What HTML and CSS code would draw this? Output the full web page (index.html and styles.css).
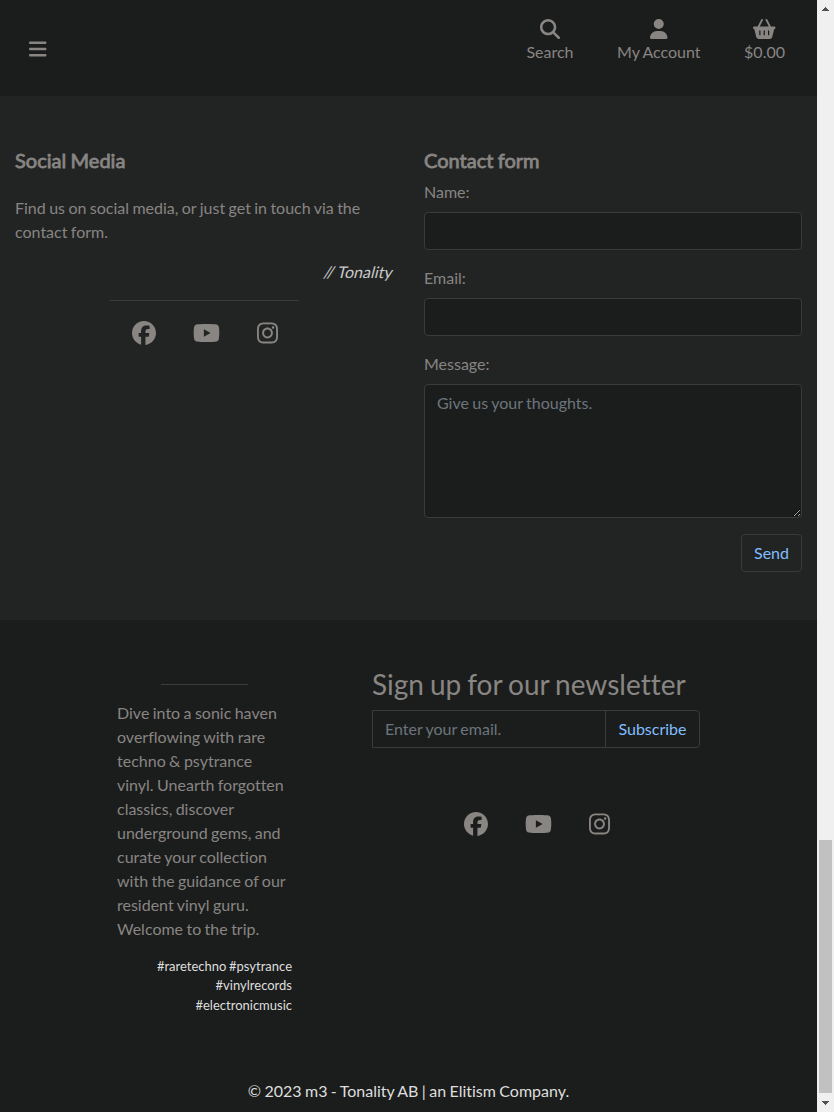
FILE: index.html
```
<!DOCTYPE html>
<html lang="en">
<head>
<meta charset="utf-8">
<title>Tonality</title>
<link rel="stylesheet" href="styles.css">
</head>
<body>
<svg class="sprite" aria-hidden="true">
  <symbol id="facebook" viewBox="0 0 512 512"><path d="M512 256C512 114.6 397.4 0 256 0S0 114.6 0 256C0 376 82.7 476.8 194.2 504.5V334.2H141.4V256h52.8V222.3c0-87.1 39.4-127.5 125-127.5c16.2 0 44.2 3.2 55.7 6.4V172c-6-.6-16.5-1-29.6-1c-42 0-58.2 15.9-58.2 57.2V256h83.6l-14.4 78.2H287V510.1C413.8 494.8 512 386.9 512 256h0z"/></symbol>
  <symbol id="youtube" viewBox="0 0 576 512"><path d="M549.655 124.083c-6.281-23.65-24.787-42.276-48.284-48.597C458.781 64 288 64 288 64S117.22 64 74.629 75.486c-23.497 6.322-42.003 24.947-48.284 48.597-11.412 42.867-11.412 132.305-11.412 132.305s0 89.438 11.412 132.305c6.281 23.65 24.787 41.5 48.284 47.821C117.22 448 288 448 288 448s170.78 0 213.371-11.486c23.497-6.321 42.003-24.171 48.284-47.821 11.412-42.867 11.412-132.305 11.412-132.305s0-89.438-11.412-132.305zm-317.51 213.508V175.185l142.739 81.205-142.739 81.201z"/></symbol>
  <symbol id="instagram" viewBox="0 0 448 512"><path d="M224.1 141c-63.6 0-114.9 51.3-114.9 114.9s51.3 114.9 114.9 114.9S339 319.5 339 255.9 287.7 141 224.1 141zm0 189.6c-41.1 0-74.7-33.5-74.7-74.7s33.5-74.7 74.7-74.7 74.7 33.5 74.7 74.7-33.6 74.7-74.7 74.7zm146.4-194.3c0 14.9-12 26.8-26.8 26.8-14.9 0-26.8-12-26.8-26.8s12-26.8 26.8-26.8 26.8 12 26.8 26.8zm76.1 27.2c-1.7-35.9-9.9-67.7-36.2-93.9-26.2-26.2-58-34.4-93.9-36.2-37-2.1-147.9-2.1-184.9 0-35.8 1.7-67.6 9.9-93.9 36.1s-34.4 58-36.2 93.9c-2.1 37-2.1 147.9 0 184.9 1.7 35.9 9.9 67.7 36.2 93.9s58 34.4 93.9 36.2c37 2.1 147.9 2.1 184.9 0 35.9-1.7 67.7-9.9 93.9-36.2 26.2-26.2 34.4-58 36.2-93.9 2.1-37 2.1-147.8 0-184.8zM398.8 388c-7.8 19.6-22.9 34.7-42.6 42.6-29.5 11.7-99.5 9-132.1 9s-102.7 2.6-132.1-9c-19.6-7.8-34.7-22.9-42.6-42.6-11.7-29.5-9-99.5-9-132.1s-2.6-102.7 9-132.1c7.8-19.6 22.9-34.7 42.6-42.6 29.5-11.7 99.5-9 132.1-9s102.7-2.6 132.1 9c19.6 7.8 34.7 22.9 42.6 42.6 11.7 29.5 9 99.5 9 132.1s2.7 102.7-9 132.1z"/></symbol>
</svg>
<div class="window">
  <div class="page">
    <header class="topbar">
      <svg class="bars" viewBox="0 0 448 512"><path d="M0 96C0 78.300 14.300 64 32 64H416c17.700 0 32 14.300 32 32s-14.300 32-32 32H32C14.300 128 0 113.700 0 96zM0 256c0-17.700 14.300-32 32-32H416c17.700 0 32 14.300 32 32s-14.300 32-32 32H32c-17.700 0-32-14.300-32-32zM448 416c0 17.700-14.300 32-32 32H32c-17.700 0-32-14.300-32-32s14.300-32 32-32H416c17.700 0 32 14.300 32 32z"/></svg>
      <nav class="menu">
        <a class="menu-item"><svg viewBox="0 0 512 512"><path d="M416 208c0 45.900-14.900 88.300-40 122.700L502.600 457.400c12.500 12.500 12.500 32.800 0 45.300s-32.800 12.500-45.300 0L330.700 376c-34.400 25.200-76.800 40-122.700 40C93.100 416 0 322.900 0 208S93.100 0 208 0S416 93.100 416 208zM208 352a144 144 0 1 0 0-288 144 144 0 1 0 0 288z"/></svg><span>Search</span></a>
        <a class="menu-item"><svg class="user" viewBox="0 0 448 512"><path d="M224 256A128 128 0 1 0 224 0a128 128 0 1 0 0 256zm-45.700 48C79.800 304 0 383.800 0 482.300C0 498.700 13.300 512 29.700 512H418.300c16.400 0 29.700-13.300 29.700-29.700C448 383.800 368.200 304 269.700 304H178.300z"/></svg><span>My Account</span></a>
        <a class="menu-item"><svg class="basket" viewBox="0 0 576 512"><path d="M253.300 35.100c6.100-11.800 1.500-26.300-10.200-32.400s-26.300-1.500-32.400 10.200L117.600 192H32c-17.700 0-32 14.300-32 32s14.300 32 32 32L83.900 463.500C91 492 116.600 512 146 512H430c29.400 0 55-20 62.100-48.500L544 256c17.700 0 32-14.300 32-32s-14.300-32-32-32H458.400L365.300 12.900C359.200 1.200 344.700-3.400 332.900 2.700s-16.300 20.600-10.200 32.400L404.300 192H171.700L253.300 35.100zM192 304v96c0 8.800-7.200 16-16 16s-16-7.200-16-16V304c0-8.800 7.200-16 16-16s16 7.200 16 16zm96-16c8.800 0 16 7.200 16 16v96c0 8.800-7.200 16-16 16s-16-7.200-16-16V304c0-8.800 7.200-16 16-16zm128 16v96c0 8.800-7.200 16-16 16s-16-7.200-16-16V304c0-8.800 7.200-16 16-16s16 7.200 16 16z"/></svg><span>$0.00</span></a>
      </nav>
    </header>
    <main class="contact">
      <section class="social">
        <h2 class="title">Social Media</h2>
        <p class="intro">Find us on social media, or just get in touch via the contact form.</p>
        <p class="signature">// Tonality</p>
        <hr class="rule">
        <div class="links"><svg class="fb"><use href="#facebook"/></svg><svg class="yt"><use href="#youtube"/></svg><svg class="ig"><use href="#instagram"/></svg></div>
      </section>
      <form class="form">
        <h2 class="title">Contact form</h2>
        <label class="label" for="name">Name:</label>
        <input class="field" id="name" type="text">
        <label class="label" for="email">Email:</label>
        <input class="field" id="email" type="email">
        <label class="label" for="message">Message:</label>
        <textarea class="field message" id="message" placeholder="Give us your thoughts."></textarea>
        <button class="button send" type="button">Send</button>
      </form>
    </main>
    <footer class="footer">
      <div class="footer-columns">
        <section class="about">
          <hr class="rule">
          <p class="blurb">Dive into a sonic haven overflowing with rare techno &amp; psytrance vinyl. Unearth forgotten classics, discover underground gems, and curate your collection with the guidance of our resident vinyl guru. Welcome to the trip.</p>
          <p class="tags">#raretechno #psytrance #vinylrecords #electronicmusic</p>
        </section>
        <section class="newsletter">
          <h3 class="newsletter-title">Sign up for our newsletter</h3>
          <div class="signup"><input class="field signup-email" type="email" placeholder="Enter your email."><button class="button subscribe" type="button">Subscribe</button></div>
          <div class="links"><svg class="fb"><use href="#facebook"/></svg><svg class="yt"><use href="#youtube"/></svg><svg class="ig"><use href="#instagram"/></svg></div>
        </section>
      </div>
      <p class="copyright">© 2023 m3 - Tonality AB | an Elitism Company.</p>
    </footer>
  </div>
  <div class="scrollbar">
    <svg class="arrow" viewBox="0 0 7 4" shape-rendering="crispEdges"><path d="M3 0h1v1h1v1h1v1h1v1H0V3h1V2h1V1h1z"/></svg>
    <div class="thumb"></div>
    <svg class="arrow" viewBox="0 0 7 4" shape-rendering="crispEdges"><path d="M0 0h7v1H6v1H5v1H4v1H3V3H2V2H1V1H0z"/></svg>
  </div>
</div>
</body>
</html>
```
FILE: styles.css
```
* { box-sizing: border-box; }
body {
  margin: 0;
  overflow: hidden;
  background: #1b1d1c;
  color: #888583;
  font: 16px/24px Lato, sans-serif;
  font-variant-ligatures: none;
  word-spacing: -0.7px;
}
h2, h3, p { margin: 0; }
svg { display: block; fill: currentColor; }
.sprite { display: none; }
.window { display: flex; height: 1112px; }
.page { width: 817px; display: flex; flex-direction: column; }

.topbar {
  height: 96px;
  padding: 0 32px 0 29px;
  display: flex;
  justify-content: space-between;
}
.bars { width: 17.5px; height: 20px; margin-top: 38.5px; }
.menu { display: flex; gap: 43.5px; padding-top: 18.5px; }
.menu-item { display: flex; flex-direction: column; align-items: center; gap: 1.5px; }
.menu-item svg { width: 20px; height: 20px; }
.menu-item .user { width: 17.5px; }
.menu-item .basket { width: 22.5px; }

.contact {
  height: 524px;
  padding: 52px 15px 0;
  background: #222423;
  display: grid;
  grid-template-columns: 378px 378px;
  column-gap: 31px;
  align-content: start;
}
.title {
  font-size: 20px;
  line-height: 24px;
  font-weight: 400;
  -webkit-text-stroke: 0.8px currentColor;
}
.intro { margin-top: 24px; }
/* Slanted regular cut, wider than the true italic */
.signature {
  margin-top: 16px;
  text-align: right;
  color: #c9c9c9;
  transform: skewX(-14deg);
}
.rule { width: 50%; margin: 16px auto 20px; border: 0; border-top: 1px solid #3b3d3c; }
.links { display: flex; justify-content: center; gap: 37px; padding-left: 1px; }
.fb { width: 24px; height: 24px; }
.yt { width: 27px; height: 24px; }
.ig { width: 21px; height: 24px; }
.form { display: flex; flex-direction: column; }
.label { margin: 8px 0; }
.field {
  height: 38px;
  padding: 6px 12px;
  border: 1px solid #393b3a;
  border-radius: 4px;
  background: #1b1d1c;
  color: inherit;
  font: inherit;
  word-spacing: inherit;
}
.field + .label { margin-top: 16px; }
.field::placeholder { color: #6c757d; opacity: 1; }
.message { height: 134px; resize: vertical; }
.button {
  height: 38px;
  padding: 0 12px;
  border: 1px solid #393b3a;
  border-radius: 4px;
  background: transparent;
  color: #80bdff;
  font: inherit;
}
.send { align-self: flex-end; margin-top: 16px; }

.footer { flex: 1; display: flex; flex-direction: column; }
.footer-columns { display: flex; padding: 44px 0 0 117px; }
.about { width: 175px; margin-right: 80px; }
.about .rule { margin: 20px auto 16px; }
.blurb { padding-right: 4px; }
.tags { margin-top: 15.5px; font-size: 13px; line-height: 19.5px; text-align: right; color: #dedede; }
.newsletter { width: 328px; }
.newsletter-title { font-size: 28px; line-height: 41px; font-weight: 400; word-spacing: -1.2px; }
.signup { display: flex; margin: 5px 0 64px; }
.signup-email { width: 234px; padding: 5px 12px 7px; border-radius: 0; }
.subscribe { flex: 1; margin-left: -1px; border-radius: 0 4px 4px 0; }
.copyright { margin-top: auto; padding-bottom: 9px; text-align: center; color: #dedede; }

.scrollbar {
  width: 17px;
  padding: 7px 2px;
  background: #f0f0f0;
  display: flex;
  flex-direction: column;
  align-items: center;
}
.arrow { width: 7px; height: 4px; fill: #505050; }
.thumb { width: 13px; height: 253px; margin: auto 0 8px; background: #c1c1c1; }
```
